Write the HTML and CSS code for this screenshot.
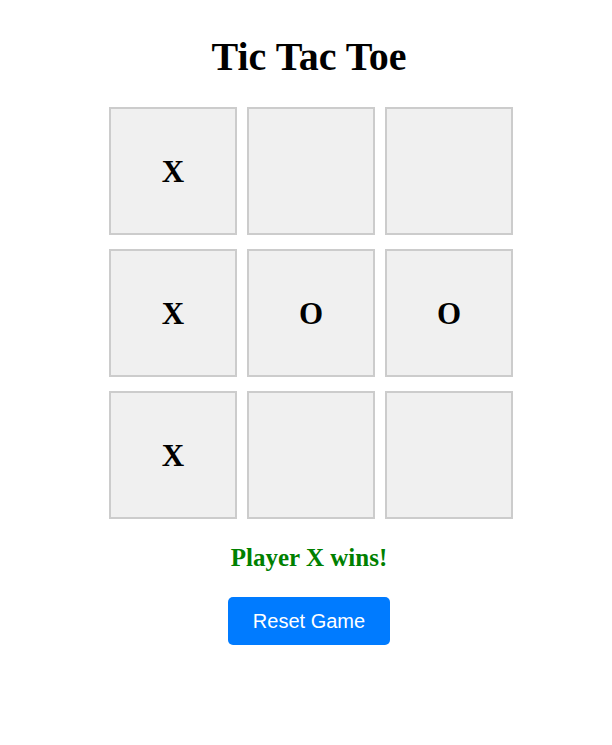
FILE: index.html
```html
<!DOCTYPE html>
<html lang="en">
<head>
<meta charset="utf-8">
<title>Tic Tac Toe</title>
<link rel="stylesheet" href="styles.css">
</head>
<body>
<main class="game">
  <h1 class="title">Tic Tac Toe</h1>
  <div class="board">
    <div class="cell">X</div>
    <div class="cell"></div>
    <div class="cell"></div>
    <div class="cell">X</div>
    <div class="cell">O</div>
    <div class="cell">O</div>
    <div class="cell">X</div>
    <div class="cell"></div>
    <div class="cell"></div>
  </div>
  <p class="status">Player X wins!</p>
  <button class="reset" type="button">Reset Game</button>
</main>
</body>
</html>
```

FILE: styles.css
```css
html, body {
  margin: 0;
  padding: 0;
  background: #ffffff;
}

body {
  font-family: "Liberation Serif", "Times New Roman", serif;
  color: #000000;
}

.game {
  display: flex;
  flex-direction: column;
  align-items: center;
  padding-left: 6px;
}

.title {
  margin: 34px 0 0;
  font-size: 40px;
  line-height: 46px;
  font-weight: bold;
}

.board {
  margin-top: 27px;
  padding-left: 4px;
  display: grid;
  grid-template-columns: repeat(3, 128px);
  grid-auto-rows: 128px;
  column-gap: 10px;
  row-gap: 14px;
}

.cell {
  box-sizing: border-box;
  border: 2px solid #cccccc;
  background: #f0f0f0;
  display: flex;
  align-items: center;
  justify-content: center;
  padding-top: 2px;
  font-size: 31px;
  font-weight: bold;
}

.status {
  margin: 24px 0 0;
  font-size: 25px;
  line-height: 29px;
  font-weight: bold;
  color: #008000;
}

.reset {
  margin-top: 25px;
  padding: 12px 25px;
  border: none;
  border-radius: 5px;
  background: #007bff;
  color: #ffffff;
  font-family: "Liberation Sans", Arial, sans-serif;
  font-size: 20px;
  line-height: 24px;
  cursor: pointer;
}
```
